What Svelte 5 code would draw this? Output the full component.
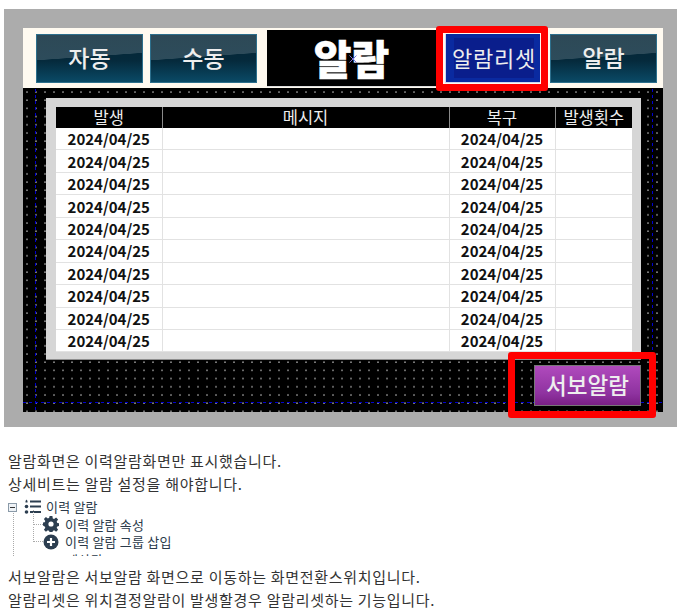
<script>
  const rows = Array(10).fill('2024/04/25');
</script>

<main>
  <section class="frame">
    <div class="screen">
      <header class="topbar">
        <button class="nav nav-a">자동</button>
        <button class="nav nav-b">수동</button>
        <div class="title">
          알람
          <svg class="anchor" width="8" height="8" viewBox="0 0 8 8">
            <path d="M0.5 0.5l7 7M7.5 0.5l-7 7" stroke="#7d74d8" stroke-width="1" />
          </svg>
        </div>
        <button class="reset"><span>알람리셋</span></button>
        <button class="nav nav-c">알람</button>
      </header>

      <div class="body">
        <i class="guide guide-l"></i>
        <i class="guide guide-r"></i>
        <i class="guide guide-b"></i>
        <div class="panel">
          <table>
            <colgroup>
              <col style="width:106px" />
              <col style="width:287px" />
              <col style="width:106px" />
              <col style="width:77px" />
            </colgroup>
            <thead>
              <tr><th>발생</th><th>메시지</th><th>복구</th><th>발생횟수</th></tr>
            </thead>
            <tbody>
              {#each rows as date}
                <tr><td>{date}</td><td></td><td>{date}</td><td></td></tr>
              {/each}
            </tbody>
          </table>
        </div>
        <div class="footer">
          <button class="servo">서보알람</button>
        </div>
      </div>

      <!-- red markers drawn over the screenshot -->
      <div class="mark mark-reset"></div>
      <div class="mark mark-servo"></div>
    </div>
  </section>

  <article class="notes">
    <p>알람화면은 이력알람화면만 표시했습니다.</p>
    <p>상세비트는 알람 설정을 해야합니다.</p>
    <div class="tree">
      <div class="node root">
        <svg width="9" height="9" viewBox="0 0 9 9" class="toggle">
          <rect x="0.5" y="0.5" width="8" height="8" fill="#eef2f6" stroke="#8a9aa8" />
          <path d="M2 4.5h5" stroke="#333" />
        </svg>
        <svg width="17" height="16" viewBox="0 0 17 16">
          <g fill="#2c3e50">
            <path d="M2.5 0.5l1 1.5v1.5h-2V2z" />
            <circle cx="2.5" cy="7.5" r="1.8" />
            <circle cx="2.5" cy="13" r="1.8" />
            <rect x="6" y="1.5" width="11" height="2" />
            <rect x="6" y="6.5" width="11" height="2" />
            <rect x="6" y="12" width="11" height="2" />
          </g>
        </svg>
        <span>이력 알람</span>
      </div>
      <div class="node child">
        <svg width="16" height="16" viewBox="0 0 16 16">
          <path fill="#2c3e50" fill-rule="evenodd" d="M6.6 0h2.8l.4 2.4 1.3.6 2-1.4 2 2-1.4 2 .6 1.3 2.1.3v2.8l-2.1.4-.6 1.3 1.4 2-2 2-2-1.4-1.3.6-.4 2.1H6.6l-.4-2.1-1.3-.6-2 1.4-2-2 1.4-2-.6-1.3L0 9.4V6.6l1.7-.3.6-1.3-1.4-2 2-2 2 1.4 1.3-.6zM8 5.4a2.6 2.6 0 1 0 0 5.2 2.6 2.6 0 0 0 0-5.2z" />
        </svg>
        <span>이력 알람 속성</span>
      </div>
      <div class="node child">
        <svg width="16" height="16" viewBox="0 0 16 16">
          <circle cx="8" cy="8" r="7.5" fill="#2c3e50" />
          <path d="M4 8h8M8 4v8" stroke="#fff" stroke-width="2.2" />
        </svg>
        <span>이력 알람 그룹 삽입</span>
      </div>
      <div class="node cut">
        <svg width="5" height="4" viewBox="0 0 5 4"><rect x="0.5" y="0.5" width="3" height="3" fill="none" stroke="#556" /></svg>
        <span>계산된</span>
      </div>
    </div>
    <p>서보알람은 서보알람 화면으로 이동하는 화면전환스위치입니다.</p>
    <p>알람리셋은 위치결정알람이 발생할경우 알람리셋하는 기능입니다.</p>
  </article>
</main>

<style>
  :global(body) {
    margin: 0;
    background: #fff;
  }

  main {
    width: 682px;
    height: 616px;
    overflow: hidden;
    font-family: "Noto Sans CJK KR", "Noto Sans", sans-serif;
    padding-top: 9px;
    box-sizing: border-box;
  }

  .frame {
    width: 673px;
    height: 418px;
    margin-left: 4px;
    padding: 19px;
    box-sizing: border-box;
    background: #acacac;
  }

  .screen {
    position: relative;
    width: 640px;
    height: 384px;
    background: #000;
    display: flex;
    flex-direction: column;
  }

  .topbar {
    height: 60px;
    flex: none;
    background: #fffaf0;
    display: flex;
    align-items: center;
    padding: 0 7px 0 13px;
    box-sizing: border-box;
  }

  button {
    border: 0;
    padding: 0;
    margin: 0;
    font-family: inherit;
    color: #eeeeee;
  }

  .nav {
    width: 107px;
    height: 49px;
    flex: none;
    font-size: 23px;
    font-weight: 500;
    padding-bottom: 2px;
    border: 1px solid #2d6f8c;
    box-sizing: border-box;
    background:
      linear-gradient(176deg, rgba(255, 255, 255, 0.16) 0 46%, rgba(255, 255, 255, 0) 47%),
      linear-gradient(#052636 0%, #052a3c 55%, #0a4a66 100%);
  }

  .nav-b {
    margin-left: 7px;
  }

  .title {
    position: relative;
    width: 169px;
    height: 57px;
    flex: none;
    margin-left: 10px;
    background: #000;
    color: #fff;
    font-size: 41px;
    font-weight: 900;
    line-height: 54px;
    text-align: center;
    border-bottom: 1px solid #ddd;
    box-sizing: border-box;
    -webkit-text-stroke: 0.6px #fff;
  }

  .anchor {
    position: absolute;
    left: 82px;
    top: 25px;
  }

  .reset {
    width: 95px;
    height: 49px;
    flex: none;
    margin-left: 9px;
    padding: 4px 6px 4px 8px;
    box-sizing: border-box;
    background: #0a2aa0;
    border-left: 1px solid #cfd8f0;
    border-bottom: 1px solid #cfd8f0;
    font-size: 22px;
    letter-spacing: 0.8px;
  }

  .reset span {
    display: flex;
    align-items: center;
    justify-content: center;
    height: 100%;
    padding-bottom: 2px;
    box-sizing: border-box;
    background: #0a1e8c;
    white-space: nowrap;
  }

  .nav-c {
    margin-left: 10px;
  }

  .body {
    flex: 1;
    position: relative;
    margin-top: 1px;
    padding: 9px 22px 0 23px;
    background-color: #000;
    background-image: radial-gradient(circle at 1px 1px, #7c7c7c 0.6px, transparent 1px);
    background-size: 9px 8.2px;
    background-position: 3px 2px;
  }

  .guide {
    position: absolute;
    display: block;
  }

  .guide-l,
  .guide-r {
    top: 0;
    bottom: 0;
    width: 1px;
    background: repeating-linear-gradient(#0000d0 0 3px, transparent 3px 6px);
  }

  .guide-l {
    left: 12px;
  }

  .guide-r {
    left: 629px;
  }

  .guide-b {
    left: 0;
    right: 0;
    top: 313px;
    height: 1px;
    background: repeating-linear-gradient(90deg, #0000d0 0 3px, transparent 3px 6px);
  }

  .panel {
    position: relative;
    width: 595px;
    height: 262px;
    padding: 9px 9px 0 10px;
    box-sizing: border-box;
    background: #d6d6d6;
    border-bottom: 1px solid #8d8d8d;
  }

  table {
    width: 576px;
    table-layout: fixed;
    border-collapse: collapse;
    background: #fff;
  }

  th {
    height: 21px;
    padding: 0;
    background: #000;
    color: #eeeeee;
    font-size: 16.5px;
    font-weight: 400;
    line-height: 21px;
    border-left: 1px solid #8a8a8a;
  }

  th:first-child,
  td:first-child {
    border-left: 0;
  }

  td {
    height: 20.45px;
    padding: 1px 0 0;
    text-align: center;
    color: #111;
    font-size: 15px;
    font-weight: 700;
    line-height: 20px;
    border-left: 1px solid #e2e2e2;
    border-bottom: 1px solid #e2e2e2;
  }

  .footer {
    position: relative;
    display: flex;
    justify-content: flex-end;
    padding-top: 5px;
  }

  .servo {
    width: 107px;
    height: 41px;
    font-size: 22.5px;
    font-weight: 500;
    padding-bottom: 3px;
    border: 1px solid #777;
    box-sizing: border-box;
    background: linear-gradient(#b04abd, #8f33a0 70%, #7a1f86);
  }

  .mark {
    position: absolute;
    border: 7px solid #f00;
    border-radius: 3px;
    box-sizing: border-box;
  }

  .mark-reset {
    left: 413px;
    top: -2px;
    width: 112px;
    height: 65px;
  }

  .mark-servo {
    left: 485px;
    top: 324px;
    width: 148px;
    height: 66px;
  }

  .notes {
    padding: 22px 0 0 8px;
    color: #333;
    font-size: 15px;
    letter-spacing: 0.7px;
  }

  .notes p {
    margin: 0;
    height: 23px;
    line-height: 23px;
    white-space: nowrap;
  }

  .tree {
    height: 58px;
    overflow: hidden;
    position: relative;
    color: #2b3a4a;
    font-size: 13px;
    letter-spacing: 0.2px;
    margin-top: 3px;
    margin-bottom: 9px;
  }

  .tree::before {
    content: "";
    position: absolute;
    left: 5px;
    top: 10px;
    bottom: 0;
    border-left: 1px dotted #aaa;
  }

  .node {
    display: flex;
    align-items: center;
    gap: 5px;
    height: 17.5px;
    position: relative;
  }

  .toggle {
    position: relative;
    margin-top: 1px;
    margin-right: 2px;
  }

  .child {
    padding-left: 35px;
    gap: 6px;
  }

  .child::before {
    content: "";
    position: absolute;
    left: 25px;
    top: -6px;
    width: 9px;
    height: 14px;
    border-left: 1px dotted #aaa;
    border-bottom: 1px dotted #aaa;
  }

  .cut {
    padding-left: 22px;
    gap: 31px;
    overflow: hidden;
  }
</style>
